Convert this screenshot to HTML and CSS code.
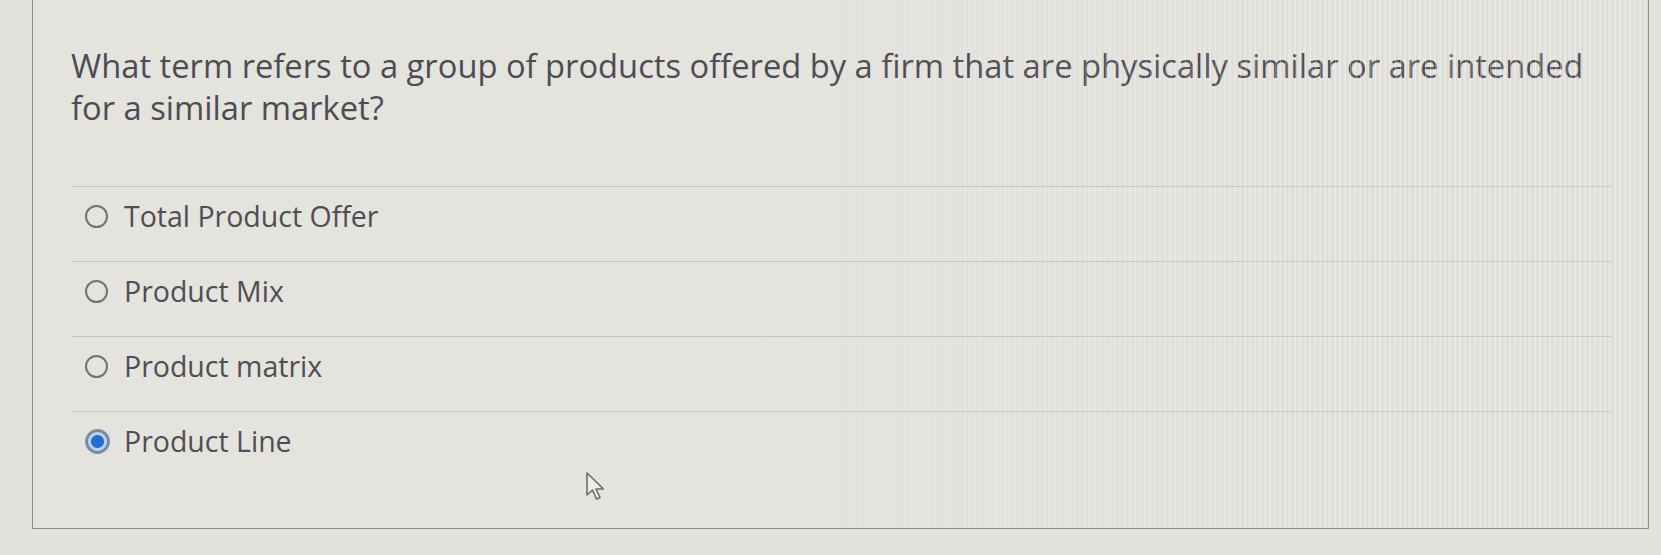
FILE: index.html
```html
<!DOCTYPE html>
<html lang="en">
<head>
    <meta charset="UTF-8">
    <title>Question</title>
    <link rel="stylesheet" href="styles.css">
</head>
<body>
    <div class="question-box">
        <p class="question">What term refers to a group of products offered by a firm that are physically similar or are intended for a similar market?</p>

        <div class="choices">
            <label class="choice">
                <span class="radio"></span>
                <span class="choice-text">Total Product Offer</span>
            </label>
            <label class="choice">
                <span class="radio"></span>
                <span class="choice-text">Product Mix</span>
            </label>
            <label class="choice">
                <span class="radio"></span>
                <span class="choice-text">Product matrix</span>
            </label>
            <label class="choice checked">
                <span class="radio"></span>
                <span class="choice-text">Product Line</span>
            </label>
        </div>

        <!-- mouse pointer -->
        <svg class="pointer" width="24" height="32" viewBox="0 0 24 32">
            <path d="M2 2 L2 24 L7.5 19 L11.5 28 L15 26.5 L11 18 L18.5 18 Z" fill="#ecebe7" stroke="#6d6d70" stroke-width="1.6" stroke-linejoin="round"/>
        </svg>
    </div>
</body>
</html>
```

FILE: styles.css
```css
body {
    margin: 0;
    padding: 0;
    background-color: #e3e2dd;
    font-family: 'Open Sans', 'Noto Sans', sans-serif;
    color: #4f4e55;
}

.question-box {
    position: relative;
    margin-left: 32px;
    width: 1617px;
    height: 529px;
    box-sizing: border-box;
    padding: 45px 36px 0 38px;
    border: 1px solid #8e8e8e;
    border-top: none;
    background-color: #e4e3de;
}

/* screen moire on the right side of the photo */
.question-box::after {
    content: "";
    position: absolute;
    top: 0;
    right: 0;
    bottom: 0;
    width: 55%;
    pointer-events: none;
    background: repeating-linear-gradient(90deg, rgba(255, 255, 255, 0.3) 0 1px, rgba(200, 199, 194, 0.2) 1px 3px, transparent 3px 5px);
    -webkit-mask-image: linear-gradient(90deg, transparent, #000 70%);
    mask-image: linear-gradient(90deg, transparent, #000 70%);
}

.question {
    margin: 0;
    padding-right: 12px;
    font-size: 32.7px;
    line-height: 42px;
    color: #4d4c54;
}

.choices {
    margin-top: 57px;
}

.choice {
    display: flex;
    align-items: center;
    height: 75px;
    box-sizing: border-box;
    border-top: 1px solid #c6c5c0;
    cursor: pointer;
}

.radio {
    flex: none;
    width: 23px;
    height: 23px;
    margin: -16px 16px 0 14px;
    box-sizing: border-box;
    border: 2px solid #727176;
    border-radius: 50%;
}

.choice-text {
    margin-top: -16px;
    font-size: 28.5px;
    line-height: 36px;
}

.choice.checked .radio {
    width: 25px;
    height: 25px;
    margin-left: 14px;
    margin-right: 14px;
    border: 2px solid #7c8ea6;
    background: radial-gradient(circle, #236bd6 0 6px, #b9d0ee 7px 9px, #6f7f98 10px);
}

.pointer {
    position: absolute;
    left: 552px;
    top: 471px;
}
```
